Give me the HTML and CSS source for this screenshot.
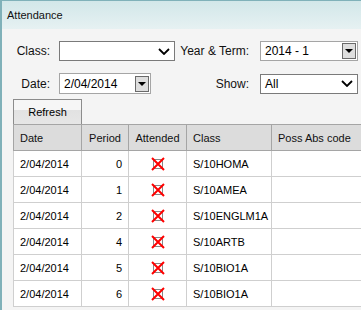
FILE: index.html
```html
<!DOCTYPE html>
<html lang="en">
<head>
  <meta charset="UTF-8" />
  <title>Attendance</title>
  <link rel="stylesheet" href="styles.css">
</head>
<body>
  <div class="panel">
    <div class="panel-header">Attendance</div>
    <div class="panel-body">
      <div class="filters">
        <label>Class:</label>
        <div class="select">
          <span></span>
          <svg class="chevron" width="12" height="7" viewBox="0 0 12 7"><path d="M1 1 L6 6 L11 1" fill="none" stroke="#000" stroke-width="1.8"/></svg>
        </div>

        <label>Year &amp; Term:</label>
        <div class="select classic">
          <span>2014 - 1</span>
          <span class="drop-btn"><i></i></span>
        </div>

        <label>Date:</label>
        <div class="select classic date">
          <span>2/04/2014</span>
          <span class="drop-btn"><i></i></span>
        </div>

        <label>Show:</label>
        <div class="select">
          <span>All</span>
          <svg class="chevron" width="12" height="7" viewBox="0 0 12 7"><path d="M1 1 L6 6 L11 1" fill="none" stroke="#000" stroke-width="1.8"/></svg>
        </div>
      </div>

      <button class="refresh">Refresh</button>

      <table class="grid">
        <thead>
          <tr>
            <th class="c-date">Date</th>
            <th class="c-period">Period</th>
            <th class="c-att">Attended</th>
            <th class="c-class">Class</th>
            <th class="c-code">Poss Abs code</th>
          </tr>
        </thead>
        <tbody id="rows"></tbody>
      </table>
    </div>
  </div>

  <script>
    const rows = [
      ['2/04/2014', 0, 'S/10HOMA'],
      ['2/04/2014', 1, 'S/10AMEA'],
      ['2/04/2014', 2, 'S/10ENGLM1A'],
      ['2/04/2014', 4, 'S/10ARTB'],
      ['2/04/2014', 5, 'S/10BIO1A'],
      ['2/04/2014', 6, 'S/10BIO1A']
    ];

    const crossBox = `<svg width="14" height="14" viewBox="0 0 14 14">
        <rect x="2.5" y="2.5" width="9" height="9" fill="#fff" stroke="#888"/>
        <path d="M1 1 L13 13 M13 1 L1 13" stroke="#f00" stroke-width="2"/>
      </svg>`;

    const body = document.getElementById('rows');
    rows.forEach(r => {
      const tr = document.createElement('tr');
      tr.innerHTML = `<td>${r[0]}</td><td class="num">${r[1]}</td>` +
        `<td class="mid">${crossBox}</td><td>${r[2]}</td><td></td>`;
      body.appendChild(tr);
    });
  </script>
</body>
</html>
```

FILE: styles.css
```css
body {
  margin: 0;
  font-family: 'Liberation Sans', Arial, sans-serif;
  font-size: 11px;
  color: #000;
  overflow: hidden;
}

.panel {
  height: 310px;
  border-left: 2px solid #80b1b9;
  border-top: 1px solid #80b1b9;
  background: #f4f4f4;
}

.panel-header {
  height: 28px;
  line-height: 28px;
  padding-left: 5px;
  font-size: 11px;
  color: #111;
  background: linear-gradient(#d2e7e9, #e6f1f2);
}

.panel-body {
  padding: 12px 0 0 11px;
}

.filters {
  display: grid;
  grid-template-columns: 46px 116px 85px 98px;
  row-gap: 12px;
  align-items: center;
}

.filters label {
  text-align: right;
  padding-right: 9px;
  font-size: 12px;
  color: #111;
}

.filters label:nth-of-type(2n) {
  padding-right: 11px;
}

.select {
  height: 20px;
  box-sizing: border-box;
  border: 1px solid #7a7a7a;
  background: #fff;
  display: flex;
  align-items: center;
  justify-content: space-between;
  padding: 0 4px;
  font-size: 12px;
}

.select.classic {
  border-color: #a5a5a5;
  padding: 0 1px 0 4px;
}

.select.date {
  width: 92px;
  height: 21px;
}

.drop-btn {
  width: 14px;
  height: 16px;
  box-sizing: border-box;
  border: 1px solid #6a6a6a;
  background: #dedede;
  display: flex;
  align-items: center;
  justify-content: center;
}

.drop-btn i {
  width: 0;
  height: 0;
  border-left: 4px solid transparent;
  border-right: 4px solid transparent;
  border-top: 4px solid #000;
}

.refresh {
  display: block;
  margin-top: 5px;
  width: 69px;
  height: 25px;
  font-family: inherit;
  font-size: 11px;
  border: 1px solid #8c8c8c;
  border-bottom: none;
  background: linear-gradient(#f6f6f6 40%, #e2e2e2 42%, #e6e6e6);
  padding: 0;
}

.grid {
  border-collapse: collapse;
  table-layout: fixed;
  width: 420px;
  background: #fff;
}

.grid th {
  height: 25px;
  background: #dcdcdc;
  border: 1px solid #a5a5a5;
  font-weight: normal;
  text-align: left;
  padding: 0 6px;
  color: #111;
  white-space: nowrap;
}

.grid td {
  height: 25px;
  border: 1px solid #cfcfcf;
  padding: 0 6px;
}

.grid th.c-period,
.grid th.c-att {
  text-align: center;
}

.c-date { width: 55px; }
.c-period { width: 34px; }
.c-att { width: 45px; }
.c-class { width: 72px; }

.grid td.num {
  text-align: right;
}

.grid td.mid {
  text-align: center;
  line-height: 0;
}
```
